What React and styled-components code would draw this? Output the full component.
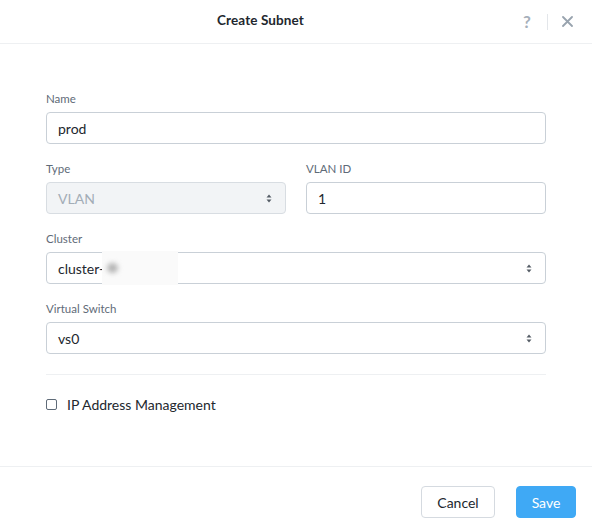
import React from "react";
import styled, { createGlobalStyle } from "styled-components";

const Global = createGlobalStyle`
  html, body { margin: 0; padding: 0; background: #fff; }
  body { font-family: Lato, "Open Sans", Arial, sans-serif; color: #22272e; }
  * { box-sizing: border-box; }
`;

const Dialog = styled.div`
  width: 592px;
  height: 529px;
  display: flex;
  flex-direction: column;
  background: #fff;
`;

const Header = styled.header`
  height: 44px;
  flex: none;
  display: flex;
  align-items: center;
  padding: 0 14px 3px 5px;
  border-bottom: 1px solid #eef0f2;
`;

const Title = styled.h1`
  flex: 1;
  margin: 0;
  text-align: center;
  font-size: 13.5px;
  font-weight: 700;
  color: #22272e;
  letter-spacing: 0.1px;
`;

const Actions = styled.div`
  display: flex;
  align-items: center;
  margin-top: 3px;
`;

const IconButton = styled.button`
  border: 0;
  background: none;
  padding: 0;
  width: 22px;
  height: 22px;
  display: flex;
  align-items: center;
  justify-content: center;
  color: #a5afba;
  font-family: Lato, Arial, sans-serif;
  font-size: 17px;
  font-weight: 700;
  cursor: pointer;
`;

const VDivider = styled.span`
  width: 1px;
  height: 16px;
  background: #e3e6ea;
  margin: 0 8px 0 9px;
`;

const Body = styled.main`
  flex: 1;
  padding: 47px 46px 0 46px;
  display: flex;
  flex-direction: column;
`;

const Fields = styled.div`
  display: flex;
  flex-direction: column;
  gap: 17px;
`;

const Row = styled.div`
  display: grid;
  grid-template-columns: 1fr 1fr;
  gap: 20px;
`;

const Field = styled.div`
  display: flex;
  flex-direction: column;
  gap: 5px;
`;

const Label = styled.label`
  font-size: 11.5px;
  line-height: 16px;
  color: #5f6b78;
`;

const Box = styled.div`
  position: relative;
  height: 32px;
  border: 1px solid ${(p) => (p.$disabled ? "#d8dde2" : "#c9d0d7")};
  border-radius: 4px;
  background: ${(p) => (p.$disabled ? "#f2f4f6" : "#fff")};
  color: ${(p) => (p.$disabled ? "#a3adb7" : "#22272e")};
  font-size: 14px;
  display: flex;
  align-items: center;
  padding: 0 11px;
`;

const Value = styled.span`
  flex: 1;
  display: flex;
  align-items: center;
  align-self: stretch;
`;

const Redacted = styled.span`
  align-self: stretch;
  margin: -2px 0 -2px -2px;
  width: 76px;
  background: #fafafa;
  display: flex;
  align-items: center;
  padding-left: 5px;
`;

const Blur = styled.span`
  width: 11px;
  height: 10px;
  border-radius: 50%;
  background: #b4b4b4;
  filter: blur(2.5px);
`;

const Arrows = () => (
  <svg width="6" height="9" viewBox="0 0 6 9" style={{ flex: "none", marginRight: 2 }}>
    <path d="M3 0.5 L5.5 3.5 H0.5 Z" fill="#555d66" />
    <path d="M3 8.5 L5.5 5.5 H0.5 Z" fill="#555d66" />
  </svg>
);

const Separator = styled.hr`
  border: 0;
  border-top: 1px solid #eef0f2;
  margin: 20px 0 0;
`;

const CheckRow = styled.label`
  margin-top: 21px;
  display: flex;
  align-items: center;
  gap: 10px;
  font-size: 14px;
  color: #22272e;
`;

const CheckBox = styled.span`
  width: 11px;
  height: 11px;
  border: 1.5px solid #5f6b78;
  border-radius: 2px;
  background: #fff;
`;

const Footer = styled.footer`
  flex: none;
  height: 63px;
  border-top: 1px solid #eef0f2;
  display: flex;
  justify-content: flex-end;
  align-items: flex-start;
  gap: 21px;
  padding: 19px 16px 0 0;
`;

const Button = styled.button`
  height: 32px;
  min-width: ${(p) => (p.$primary ? "60px" : "74px")};
  padding: 0 14px;
  border-radius: 4px;
  border: 1px solid ${(p) => (p.$primary ? "#3fa9f5" : "#d5dae0")};
  background: ${(p) => (p.$primary ? "#3fa9f5" : "#fff")};
  color: ${(p) => (p.$primary ? "#fff" : "#22272e")};
  font-family: Lato, Arial, sans-serif;
  font-size: 14px;
  cursor: pointer;
`;

export default function App() {
  return (
    <>
      <Global />
      <Dialog>
        <Header>
          <Title>Create Subnet</Title>
          <Actions>
            <IconButton aria-label="Help">?</IconButton>
            <VDivider />
            <IconButton aria-label="Close">
              <svg width="11" height="11" viewBox="0 0 11 11">
                <path d="M1 1 L10 10 M10 1 L1 10" stroke="#98a3ae" strokeWidth="1.8" strokeLinecap="round" />
              </svg>
            </IconButton>
          </Actions>
        </Header>
        <Body>
          <Fields>
            <Field>
              <Label>Name</Label>
              <Box><Value>prod</Value></Box>
            </Field>
            <Row>
              <Field>
                <Label>Type</Label>
                <Box $disabled><Value>VLAN</Value><Arrows /></Box>
              </Field>
              <Field>
                <Label>VLAN ID</Label>
                <Box><Value>1</Value></Box>
              </Field>
            </Row>
            <Field>
              <Label>Cluster</Label>
              <Box>
                <Value>cluster-<Redacted><Blur /></Redacted></Value>
                <Arrows />
              </Box>
            </Field>
            <Field>
              <Label>Virtual Switch</Label>
              <Box><Value>vs0</Value><Arrows /></Box>
            </Field>
          </Fields>
          <Separator />
          <CheckRow>
            <CheckBox />
            IP Address Management
          </CheckRow>
        </Body>
        <Footer>
          <Button>Cancel</Button>
          <Button $primary>Save</Button>
        </Footer>
      </Dialog>
    </>
  );
}
